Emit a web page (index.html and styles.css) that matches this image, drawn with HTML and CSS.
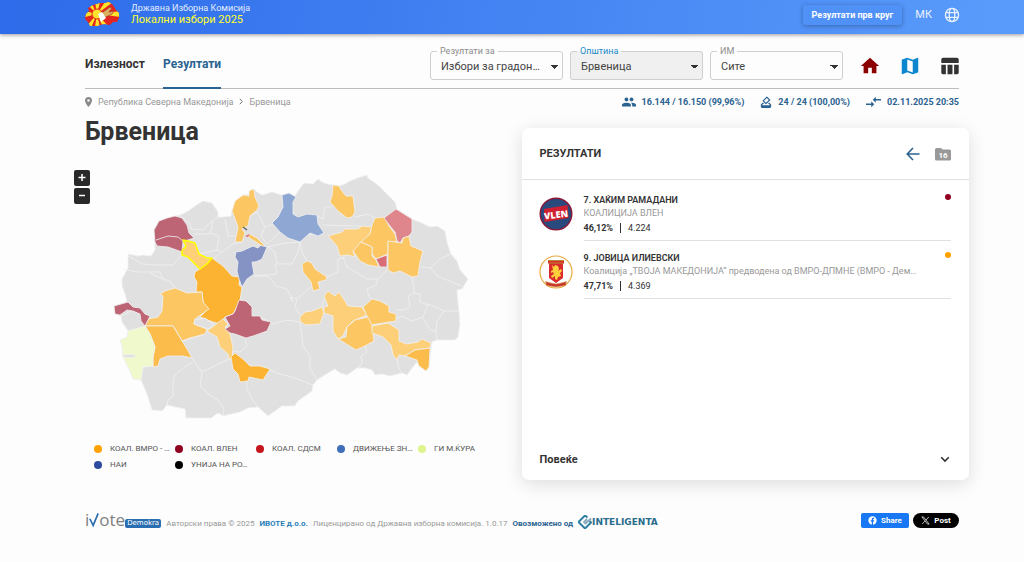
FILE: index.html
```html
<!DOCTYPE html>
<html lang="mk">
<head>
<meta charset="utf-8">
<meta name="viewport" content="width=device-width, initial-scale=1">
<title>Локални избори 2025 – Брвеница</title>
<link rel="stylesheet" href="styles.css">
</head>
<body>
<header class="topbar">
  <a class="brand" href="#">
    <svg class="brand-logo" viewBox="0 0 35 25" aria-hidden="true">
      <clipPath id="mk"><path d="M1 12 4 9 3 6 8 3 12 2 15 1 20 1 24 0 28 3 31 8 34 11 34 16 32 20 28 20 25 23 19 22 12 24 8 24 5 24 3 20 0 17Z"/></clipPath>
      <g clip-path="url(#mk)">
        <rect width="35" height="25" fill="#e3261f"/>
        <path fill="#ffe32b" d="M12 12 0 9v6ZM12 12 0 0h6ZM12 12 10 0h5ZM12 12 20 0h8ZM12 12 35 9v6ZM12 12 24 25h-6ZM12 12 10 25h5ZM12 12 0 26h6Z"/>
        <circle cx="12" cy="12" r="5" fill="#ffe32b" stroke="#e3261f"/>
      </g>
      <path d="M14 12 18 10 25 5 27 6 24 10 29 9 27 12 21 15 16 15Z" fill="#d9b062" stroke="#a8352a" stroke-width=".7"/>
      <path d="m13 12 4-2 4 6-5 4Z" fill="#fff"/>
    </svg>
    <span class="brand-text"><span class="brand-org">Државна Изборна Комисија</span><span class="brand-event">Локални избори 2025</span></span>
  </a>
  <div class="top-actions">
    <button class="round-btn" type="button">Резултати прв круг</button>
    <button class="lang-btn" type="button">МК
      <svg viewBox="0 0 16 16" aria-hidden="true"><g fill="none" stroke="currentColor" stroke-width="1.3"><circle cx="8" cy="8" r="6.600"/><ellipse cx="8" cy="8" rx="2.800" ry="6.600"/><path d="M2 5.600h12M2 10.400h12"/></g></svg>
    </button>
  </div>
</header>

<div class="page">
  <div class="toolbar">
    <nav class="tabs">
      <a class="tab" href="#">Излезност</a>
      <a class="tab active" href="#" aria-current="page">Резултати</a>
    </nav>
    <div class="filters">
      <fieldset class="field">
        <legend><label for="kind">Резултати за</label></legend>
        <select id="kind"><option>Избори за градоначалник</option></select>
      </fieldset>
      <fieldset class="field focus">
        <legend><label for="mun">Општина</label></legend>
        <select id="mun"><option>Брвеница</option></select>
      </fieldset>
      <fieldset class="field">
        <legend><label for="im">ИМ</label></legend>
        <select id="im"><option>Сите</option></select>
      </fieldset>
      <div class="views">
        <a href="#" class="view home" aria-label="Почетна"><svg viewBox="0 0 24 24"><path d="M10 20v-6h4v6h5v-8h3L12 3 2 12h3v8z"/></svg></a>
        <a href="#" class="view map-view" aria-label="Мапа"><svg viewBox="0 0 24 24"><path d="m20.5 3-.16.03L15 5.1 9 3 3.36 4.9c-.21.07-.36.25-.36.48V20.5c0 .28.22.5.5.5l.16-.03L9 18.9l6 2.1 5.640-1.900c.21-.07.36-.25.36-.48V3.500c0-.28-.22-.5-.5-.5zM15 19l-6-2.110V5l6 2.110V19z"/></svg></a>
        <a href="#" class="view table-view" aria-label="Табела"><svg viewBox="0 0 24 24"><path d="M2.500 10.500h5V21h-3a2 2 0 0 1-2-2zM9.300 10.500h5.400V21H9.300zM16.500 10.500h5V19a2 2 0 0 1-2 2h-3zM4.500 3h15a2 2 0 0 1 2 2v3.600h-19V5a2 2 0 0 1 2-2z"/></svg></a>
      </div>
    </div>
  </div>

  <div class="subbar">
    <nav class="crumbs">
      <svg class="pin" viewBox="5 2 14 20" aria-hidden="true"><path d="M12 2a7 7 0 0 0-7 7c0 5.250 7 13 7 13s7-7.750 7-13a7 7 0 0 0-7-7zm0 9.500a2.500 2.500 0 1 1 0-5 2.500 2.500 0 0 1 0 5z"/></svg>
      <a href="#">Република Северна Македонија</a>
      <svg class="sep" viewBox="0 0 4 7" aria-hidden="true"><path d="m.8.8 2.500 2.700L.8 6.200"/></svg>
      <a href="#">Брвеница</a>
    </nav>
    <ul class="stats">
      <li><svg viewBox="1 4 22 16" class="people" aria-hidden="true"><path d="M16 11c1.660 0 3-1.340 3-3s-1.340-3-3-3-3 1.340-3 3 1.340 3 3 3zm-8 0c1.660 0 3-1.340 3-3S9.660 5 8 5 5 6.340 5 8s1.340 3 3 3zm0 2c-2.330 0-7 1.170-7 3.500V19h14v-2.500C15 14.170 10.330 13 8 13zm8 0-1 .05c1.160.84 2 1.970 2 3.450V19h6v-2.500c0-2.330-4.670-3.500-7-3.500z"/></svg>16.144 / 16.150 (99,96%)</li>
      <li><svg viewBox="2 1 20 21" class="ballot" aria-hidden="true"><path d="M18 13h-.68l-2 2h1.910L19 17H5l1.780-2h2.050l-2-2H6l-3 3v4c0 1.100.89 2 1.990 2H19a2 2 0 0 0 2-2v-4zm-1-5.050-4.950 4.950-3.540-3.540 4.950-4.950zm-4.240-5.660L6.390 8.660a1 1 0 0 0 0 1.410l4.950 4.950a1 1 0 0 0 1.410 0l6.360-6.360a1 1 0 0 0 0-1.410L14.160 2.300a1 1 0 0 0-1.400 0z"/></svg>24 / 24 (100,00%)</li>
      <li><svg viewBox="2 4 20 16" class="swap" aria-hidden="true"><path d="m9.010 14-7.010 0v2h7.010v3L13 15l-3.990-4zm5.980-1v-3H22V8h-7.010V5L11 9z"/></svg>02.11.2025 20:35</li>
    </ul>
  </div>

  <main class="content">
    <section class="map-panel">
      <h1>Брвеница</h1>
      <div class="map-box">
        <div class="zoom">
          <button type="button" aria-label="Зголеми"><svg viewBox="0 0 16 16"><path d="M4.500 7.500h7M8 4v7"/></svg></button>
          <button type="button" aria-label="Намали"><svg viewBox="0 0 16 16"><path d="M5 7.500h6"/></svg></button>
        </div>
        <svg class="map" viewBox="110 172 362 250" role="img" aria-label="Мапа на општини">
          <path class="g" d="M122 280 128 269 128 255 138 257 143 256 151 257 155 251 154 231 159 222 175 217 180 216 188 212 198 205 203 202 212 204 218 213 218 218 223 218 231 217 232 211 237 202 243 196 249 195 250 191 254 190 257 193 262 196 272 193 282 196 289 194 295 197 298 192 304 184 313 185 318 180 322 183 327 185 334 186 339 187 345 185 348 183 357 179 367 176 368 179 378 186 395 203 397 210 412 220 422 224 430 228 437 227 445 232 447 243 451 255 457 262 460 271 468 280 462 290 457 291 458 303 459 312 460 325 458 338 455 341 437 341 432 343 431 350 429 368 426 372 419 367 417 363 413 368 407 376 402 374 390 377 382 375 375 376 372 371 365 369 357 369 347 376 340 374 335 370 328 374 317 381 313 386 312 392 298 402 295 407 282 407 268 417 258 408 248 409 240 413 223 417 218 414 211 419 186 419 185 410 175 408 167 406 162 412 152 411 147 395 141 381 133 380 130 372 123 358 122 347 120 341 127 338 128 332 122 323 121 317 115 315 114 307 127 303 125 295 122 287Z"/>
          <path class="b" d="M180 216 190 225 191 230 203 231 212 222 218 218M194 235H210L213 222M213 260 222 253 217 251 219 237 210 234M199 255 217 251M222 253 233 245 242 243M225 220 228 237 235 237M128 257 143 265 151 266 173 266 182 256M123 270 138 273 160 273 163 280 170 282 175 289M163 280 150 274M257 213 265 228 273 225M265 228 261 237 267 245 280 233M250 217 257 213M267 248 285 244 300 243 298 253 292 265 277 265 275 253 268 248M300 243 302 253 307 262M275 265 277 275 254 277M267 277 273 282 276 287 287 290 293 303M300 239 308 236 324 235M318 217 323 220 325 208 332 208M323 226 357 227 367 228M327 278 338 273 338 260 345 258M355 218 368 215 375 219M343 258 347 268 354 272 367 280 378 280 387 271M378 280 376 286 367 290 369 298 372 300M412 278 414 290 414 294 408 297 410 308 404 311 396 311M414 294 420 295 420 303 428 306 423 318 412 322 402 317 388 324M421 268 431 269 440 260 451 255M431 269 437 277 462 287M428 305 444 312 459 312M444 312 437 322 436 332 437 341M423 319 430 331 436 332M399 356 397 361 399 370 402 374M365 347 367 353 361 357 362 365 357 369M271 325 287 321 300 323 303 347 310 357 310 370 317 380M270 371 280 375 295 379 313 386M247 383 247 390 252 400 258 408M293 303 290 298 297 300 295 308 300 316M297 300 311 288M324 300 322 308M245 340 247 347 240 353 233 352M192 359 202 373 229 360M202 373 200 387 211 397 218 401 224 410 223 417M193 363 183 369 174 377 173 387 173 397 168 401 167 406M183 342 205 335M143 368 153 367M121 317 133 311M254 277 267 277M260 318 268 322"/>
          <path class="r" d="M154 231 159 222 167 219 175 217 182 219 187 226 189 234 194 239 188 241 183 242 182 253 168 248 157 247 155 243Z"/>
          <path class="b" d="M156 241 168 237 178 238 183 242"/>
          <path class="o5" d="M212 259 223 267 232 277 240 278 239 286 242 288 240 302 233 315 225 318 220 325 213 323 200 318 208 310 203 303 202 293 196 293 197 283 194 278 195 273 203 268Z"/>
          <path class="o3" d="M160 295 165 292 175 289 187 294 202 293 203 303 209 310 195 320 194 325 207 330 205 335 190 339 182 342 175 330 173 327 145 327 148 320 158 318 162 312 163 297Z"/>
          <path class="o4" d="M145 327 173 327 182 342 187 350 192 359 183 357 168 357 160 360 158 367 153 368 153 358 155 348 150 335Z"/>
          <path class="lime" d="M128 332 145 327 150 335 155 348 153 358 153 367 143 368 141 381 133 380 130 372 123 358 122 347 120 341 127 338Z"/>
          <ellipse class="g" cx="129" cy="357" rx="7" ry="1.500"/>
          <path class="r" d="M114 307 128 303 133 308 140 309 145 315 150 317 145 327 141 322 140 315 133 312 127 311 120 316 115 315Z"/>
          <path class="g" d="M195 321 205 319 214 326 208 330 194 325Z"/>
          <path class="o2" d="M207 332 223 320 228 325 225 328 230 335 233 348 232 360 229 360 228 355 220 348 217 338Z"/>
          <path class="r" d="M239 301 246 302 252 308 252 317 260 317 262 321 271 323 267 332 253 337 246 339 235 335 230 334 225 330 230 327 225 318 233 315 235 312Z"/>
          <path class="o5" d="M235 354 243 360 250 367 260 367 270 370 263 381 249 378 248 382 240 383 238 375 233 370 231 358Z"/>
          <path class="indigo" d="M236 253 242 252 253 247 258 249 261 246 267 248 265 253 262 260 258 262 255 263 252 263 254 275 247 280 242 288 239 280 237 272 238 263 235 258Z"/>
          <path class="o3" d="M232 212 235 202 243 196 249 197 249 192 254 190 255 198 259 207 257 211 250 217 248 227 242 230 245 234 242 243 235 243 237 233 238 228Z"/>
          <path class="o3" d="M250 235 257 239 265 247 262 247 248 238Z"/>
          <path class="rose2 thin" d="m245 237 5-2-2 3Z"/>
          <path class="black" d="m243 228 4 3"/>
          <path class="blue" d="M282 196 289 194 296 198 293 203 293 215 298 218 307 215 317 216 318 225 324 234 318 237 310 234 300 243 288 239 280 233 272 224 278 218 283 208Z"/>
          <path class="o3" d="M333 186 339 187 342 192 346 197 353 197 355 213 352 218 347 219 338 212 330 203 332 197Z"/>
          <path class="o2" d="M328 237 342 233 345 230 358 230 362 227 372 228 370 235 363 247 353 252 355 258 348 256 340 257 337 247Z"/>
          <path class="o3" d="M375 219 385 218 389 227 395 235 397 243 388 243 388 255 376 260 372 255 372 248 361 243 370 235 372 226Z"/>
          <path class="o3" d="M361 243 372 248 372 257 376 261 379 268 368 266 360 262 353 252Z"/>
          <path class="rose" d="M384 219 396 210 412 220 412 233 409 237 403 239 400 244 397 242 395 233 390 227Z"/>
          <path class="o3" d="M388 242 402 244 403 239 409 237 411 247 423 252 420 263 418 277 412 278 400 272 393 274 388 271Z"/>
          <path class="rose2" d="M376 260 387 256 387 268 380 268Z"/>
          <path class="o3" d="M302 265 307 262 312 264 315 270 327 278 326 281 318 283 320 290 313 292 311 283 303 273Z"/>
          <path class="o2" d="M300 318 305 313 312 312 322 308 324 314 320 325 305 326 300 322Z"/>
          <path class="o2" d="M324 308 328 307 324 297 328 292 335 297 339 293 345 302 348 307 362 308 367 316 353 322 347 328 343 337 338 340 333 332 333 317 324 314Z"/>
          <path class="o3" d="M347 328 355 321 368 318 372 322 372 328 374 342 365 347 356 351 343 343 338 340 346 338Z"/>
          <path class="o3" d="M363 308 372 300 380 302 389 307 389 313 396 315 396 322 377 325 372 326 367 317Z"/>
          <path class="o2" d="M372 327 388 324 399 331 399 342 407 345 418 343 422 340 431 344 430 349 415 351 405 357 399 356 397 361 393 356 391 346 383 338 372 334Z"/>
          <path class="o4" d="M405 357 415 351 430 349 429 368 426 372 419 367 417 361Z"/>
          <path class="o2 sel" d="M183 241 188 242 195 244 199 255 207 259 212 259 207 265 200 270 193 263 188 258 182 256 182 252 186 247Z"/>
        </svg>
      </div>
      <ul class="legend">
        <li><i class="dot c-orange"></i><span>КОАЛ. ВМРО - …</span></li>
        <li><i class="dot c-wine"></i><span>КОАЛ. ВЛЕН</span></li>
        <li><i class="dot c-red"></i><span>КОАЛ. СДСМ</span></li>
        <li><i class="dot c-blue"></i><span>ДВИЖЕЊЕ ЗН…</span></li>
        <li><i class="dot c-lime"></i><span>ГИ М.ЌУРА</span></li>
        <li><i class="dot c-indigo"></i><span>НАИ</span></li>
        <li><i class="dot c-black"></i><span>УНИЈА НА РО…</span></li>
      </ul>
    </section>

    <section class="card">
      <header class="card-head">
        <h2>РЕЗУЛТАТИ</h2>
        <button type="button" class="back" aria-label="Назад"><svg viewBox="0 0 14 14"><path d="M13.500 7H1.500M7 1 1.200 7 7 13"/></svg></button>
        <span class="folder"><svg viewBox="0 0 16 14" aria-hidden="true"><path d="M1.500 1H6l1.500 1.500h7A1.500 1.500 0 0 1 16 4v8a1.500 1.500 0 0 1-1.500 1.500h-13A1.500 1.500 0 0 1 0 12V2.500A1.500 1.500 0 0 1 1.500 1z"/><text x="8" y="11">16</text></svg></span>
      </header>
      <ul class="results">
        <li>
          <svg class="avatar" viewBox="0 0 34 34" aria-hidden="true"><circle cx="17" cy="17" r="15.800" fill="#294a7c" stroke="#8d1637" stroke-width="1.400"/><path d="m5 12 23.500-4 1 13L5.500 25Z" fill="#d01f30"/><text class="vlen" x="17" y="21" transform="rotate(-7 17 17)">VLEN</text></svg>
          <div class="result">
            <div class="who"><strong>7. ХАЌИМ РАМАДАНИ</strong><i class="dot c-wine"></i></div>
            <div class="party">КОАЛИЦИЈА ВЛЕН</div>
            <div class="votes"><b>46,12%</b><span>4.224</span></div>
          </div>
        </li>
        <li>
          <svg class="avatar" viewBox="0 0 34 34" aria-hidden="true"><circle cx="17" cy="17" r="16" fill="#fff" stroke="#e6ac42" stroke-width="1.200"/><path d="M9 5h16v3l-1 1v14l-7 5-7-5V9L9 8Z" fill="#d92a2c"/><path d="M9 5.500h16M9.500 8h15" stroke="#b88a35" stroke-width="1.200"/><path d="M6.500 26.500 12 28l5 1 5-1 5.500-1.500-1 4-9.500 1.500-9.500-1.500Z" fill="#c9362e" stroke="#d9a14a" stroke-width=".6"/><path d="m13 10 2 2 1-2 3 1 1 3-1 2 3-2 1 2-2 2 1 3-3 1-1 3-2-1v-3l-3 2-1-2 3-2-1-2-2 1v-2l2-1Z" fill="#ffd03c"/></svg>
          <div class="result">
            <div class="who"><strong>9. ЈОВИЦА ИЛИЕВСКИ</strong><i class="dot c-orange"></i></div>
            <div class="party">Коалиција „ТВОЈА МАКЕДОНИЈА“ предводена од ВМРО-ДПМНЕ (ВМРО - Дем…</div>
            <div class="votes"><b>47,71%</b><span>4.369</span></div>
          </div>
        </li>
      </ul>
      <button class="more" type="button">Повеќе<svg viewBox="0 0 10 7" aria-hidden="true"><path d="m1.200 1.200 3.800 3.800 3.800-3.800"/></svg></button>
    </section>
  </main>

  <footer class="footer">
    <a class="ivote" href="#"><span>i</span><svg viewBox="0 0 12 18" aria-hidden="true"><path d="M1 7.500 5 15.500 11 1"/></svg><span>ote</span><b>Demokra</b></a>
    <span>Авторски права © 2025</span>
    <a class="strong" href="#">ИВОТЕ д.о.о.</a>
    <span>Лиценцирано од Државна изборна комисија. 1.0.17</span>
    <span class="powered">Овозможено од</span>
    <a class="intel" href="#"><svg viewBox="0 0 14 14" aria-hidden="true"><path d="M9.500 2.500 7 .5.500 7 7 13.500 13 7.500 11.500 6" fill="none" stroke="#2f7fa3" stroke-width="2"/><path d="M9 4 6 7l1.500 1.500L13 3.500" fill="none" stroke="#86a9bb" stroke-width="1.800"/></svg>INTELIGENTA</a>
    <div class="share">
      <button type="button" class="fb"><svg viewBox="0 0 10 10" aria-hidden="true"><circle cx="5" cy="5" r="4.600" fill="#fff"/><path d="M4.200 10V6H3V4.700h1.200v-.9C4.200 2.600 4.900 2 6 2h.9v1.200h-.6c-.5 0-.7.2-.7.600v.9h1.300L6.700 6H5.600v4z" fill="#1877f2"/></svg>Share</button>
      <button type="button" class="x"><svg viewBox="0 0 10 10" aria-hidden="true"><path d="M1 1h1.800L9 9H7.200ZM8.800 1 5.500 4.600M4.300 5.700 1.200 9" fill="none" stroke="#fff" stroke-width=".8"/></svg>Post</button>
    </div>
  </footer>
</div>
</body>
</html>
```
FILE: styles.css
```css
* { box-sizing: border-box; }
body {
  margin: 0;
  background: #fdfdfd;
  color: #333;
  font-family: Roboto, "Noto Sans", sans-serif;
  font-size: 10px;
}
a { color: inherit; text-decoration: none; }
button { border: 0; padding: 0; background: none; color: inherit; font: inherit; cursor: pointer; }
ul { list-style: none; margin: 0; padding: 0; }
h1, h2 { margin: 0; }
svg { display: block; flex: none; }

.topbar {
  display: flex;
  justify-content: space-between;
  height: 34px;
  padding: 0 64px 5px 85px;
  background: linear-gradient(100deg, #2d6bea, #5a9cfb);
  box-shadow: 0 1px 4px rgba(0, 0, 0, .4);
  color: #fff;
}
.brand { display: flex; align-items: center; gap: 11px; }
.brand-logo { width: 35px; height: 25px; }
.brand-text { display: flex; flex-direction: column; }
.brand-org { font-size: 9px; line-height: 11px; color: #e3edff; }
.brand-event { font-size: 11px; line-height: 12px; color: #ffff2e; }
.top-actions { display: flex; align-items: center; gap: 13px; }
.round-btn {
  height: 20px;
  padding: 0 9px;
  border-radius: 3px;
  background: #5091f7;
  box-shadow: 0 1px 5px rgba(0, 0, 0, .3);
  font-size: 9px;
  font-weight: 700;
}
.lang-btn { display: flex; align-items: center; gap: 12px; color: #e9f1ff; font-size: 11px; }
.lang-btn svg { width: 16px; height: 16px; }

.page { padding: 0 55px 0 74px; }
.toolbar {
  display: flex;
  justify-content: space-between;
  margin: 0 8px 0 11px;
  height: 55px;
  background: linear-gradient(#bdbdbd, #bdbdbd) left bottom / calc(100% - 2px) 1px no-repeat;
}
.tabs { display: flex; gap: 18px; }
.tab { padding-top: 22px; height: 55px; font-size: 12px; line-height: 16px; font-weight: 700; }
.tab.active { color: #2a6291; border-bottom: 2px solid #2a6291; }
.filters { display: flex; gap: 7px; align-items: flex-start; padding-top: 11px; }
.field {
  width: 133px;
  min-width: 0;
  margin: 0;
  padding: 0;
  border: 1px solid #cfcfcf;
  border-radius: 3px;
}
.field legend { margin-left: 6px; padding: 0 3px; font-size: 9px; line-height: 12px; color: #8c8c8c; }
.field.focus { background: #f0f0f0; }
.field.focus legend { color: #1d8ccb; }
.field select {
  display: block;
  width: 100%;
  height: 20px;
  margin-bottom: 2px;
  padding: 0 22px 0 10px;
  border: 0;
  appearance: none;
  background: conic-gradient(from -45deg at 50% 100%, #333 90deg, transparent 0) right 4px center / 8px 4px no-repeat;
  color: #444;
  font: 11px/16px Roboto, "Noto Sans", sans-serif;
  text-overflow: ellipsis;
  overflow: hidden;
  white-space: nowrap;
}
.views { display: flex; gap: 18px; padding: 10px 0 0 9px; }
.view svg { width: 22px; height: 22px; fill: currentColor; }
.home { color: #8b0000; }
.map-view { color: #0c87cf; }
.table-view { color: #333; }

.subbar {
  display: flex;
  justify-content: space-between;
  align-items: center;
  margin: 0 10px 0 11px;
  height: 25px;
  font-size: 9px;
}
.crumbs { display: flex; align-items: center; gap: 6px; color: #999; }
.pin { width: 7px; height: 10px; fill: #8a8a8a; }
.sep { width: 4px; height: 7px; fill: none; stroke: #777; }
.stats { display: flex; gap: 16px; color: #2a6291; font-weight: 700; }
.stats li { display: flex; align-items: center; gap: 6px; }
.stats svg { height: 12px; fill: currentColor; }
.people { width: 14px; }
.ballot { width: 12px; }
.swap { width: 15px; }

.content { display: grid; grid-template-columns: 1fr 1fr; }
.map-panel { min-width: 0; }
h1 { padding: 3px 0 0 11px; font-size: 25px; line-height: 30px; color: #333; }
.map-box { display: flex; gap: 20px; align-items: flex-start; padding-top: 23px; }
.zoom { display: grid; gap: 2px; }
.zoom button { width: 16px; height: 16px; border-radius: 2px; background: #292929; }
.zoom svg { width: 16px; height: 16px; fill: none; stroke: #fff; stroke-width: 1.5; }
.map { flex: 1; min-width: 0; max-width: 362px; margin-top: 1px; }
.map path, .map ellipse { stroke: #f1f1f1; stroke-width: .8; stroke-linejoin: round; }
.map .g { fill: #e0e0e0; }
.map .b { fill: none; }
.map .r { fill: #bd6475; }
.map .rose { fill: #de868c; }
.map .rose2 { fill: #d96d77; }
.map .o2 { fill: #fccf78; }
.map .o3 { fill: #fcc663; }
.map .o4 { fill: #fcbc4b; }
.map .o5 { fill: #fcb332; }
.map .lime { fill: #eff9cb; }
.map .indigo { fill: #8492c4; }
.map .blue { fill: #8fa7d3; }
.map .thin { stroke: none; }
.map .black { stroke: #666; stroke-width: 1.5; }
.map .sel { stroke: #ff0; stroke-width: 1.5; }
.legend {
  display: grid;
  grid-template-columns: repeat(5, 81px);
  row-gap: 4px;
  padding: 22px 0 0 20px;
  font-size: 8px;
  line-height: 12px;
  color: #555;
}
.legend li { display: flex; align-items: center; gap: 8px; white-space: nowrap; }
.dot { flex: none; width: 8px; height: 8px; border-radius: 50%; }
.c-orange { background: #ffa200; }
.c-wine { background: #90001f; }
.c-red { background: #c4161c; }
.c-blue { background: #3f6fbb; }
.c-lime { background: #def48f; }
.c-indigo { background: #2f4ba0; }
.c-black { background: #000; }

.card {
  display: flex;
  flex-direction: column;
  align-self: start;
  min-width: 0;
  min-height: 352px;
  margin-top: 14px;
  border-radius: 7px;
  background: #fff;
  box-shadow: 0 4px 18px rgba(0, 0, 0, .13);
}
.card-head {
  display: flex;
  align-items: center;
  height: 52px;
  padding: 0 18px;
  border-bottom: 1px solid #e0e0e0;
}
.card-head h2 { flex: 1; font-size: 11px; }
.back svg { width: 14px; height: 14px; fill: none; stroke: #2a6291; stroke-width: 1.6; }
.folder { margin-left: 15px; }
.folder svg { width: 16px; height: 14px; fill: #999; }
.folder text { fill: #fff; font-size: 8px; font-weight: 700; text-anchor: middle; }
.results { flex: 1; padding: 3px 18px 0 17px; }
.results li { display: flex; gap: 11px; }
.avatar { width: 34px; height: 34px; margin-top: 14px; }
.vlen { fill: #fff; font-family: "Open Sans", sans-serif; font-size: 9px; font-weight: 800; text-anchor: middle; }
.result { flex: 1; min-width: 0; height: 58px; padding-top: 11px; border-bottom: 1px solid #e0e0e0; }
.who { display: flex; justify-content: space-between; font-size: 9px; line-height: 13px; }
.who strong { font-weight: 600; }
.who .dot { width: 6px; height: 6px; }
.party {
  overflow: hidden;
  text-overflow: ellipsis;
  white-space: nowrap;
  font-size: 9px;
  line-height: 13px;
  color: #999;
}
.votes { padding-top: 2px; font-size: 9px; line-height: 13px; }
.votes span { margin-left: 7px; padding-left: 7px; border-left: 1px solid #333; }
.more {
  display: flex;
  align-items: center;
  justify-content: space-between;
  height: 42px;
  padding: 0 19px 0 18px;
  font-size: 11px;
  font-weight: 700;
}
.more svg { width: 10px; height: 7px; fill: none; stroke: #333; stroke-width: 1.6; }

.footer {
  display: flex;
  align-items: flex-end;
  gap: 5px;
  margin: 31px 10px 0 11px;
  font-size: 8px;
  line-height: 10px;
  color: #999;
  white-space: nowrap;
}
.ivote { display: flex; align-items: flex-end; color: #808080; font: 17px/18px "Open Sans", sans-serif; }
.ivote svg { width: 10px; height: 18px; fill: none; stroke: #2a6db0; stroke-width: 2; }
.ivote b { margin-bottom: 1px; padding: 0 2px; border-radius: 2px; background: #2a6db0; color: #fff; font: 7px/9px "DejaVu Sans", sans-serif; }
.strong { color: #2a7fb8; font-weight: 700; }
.powered { color: #2a6291; font-weight: 700; }
.intel { display: flex; align-items: center; color: #2a6d8c; font: 700 9px/14px "DejaVu Sans", sans-serif; }
.intel svg { width: 14px; height: 14px; }
.share { display: flex; gap: 4px; margin-bottom: 1px; margin-left: auto; color: #fff; font-size: 8px; font-weight: 700; }
.share button { display: flex; align-items: center; justify-content: center; gap: 4px; height: 15px; }
.share svg { width: 9px; height: 9px; }
.fb { width: 48px; border-radius: 2px; background: #1877f2; }
.x { width: 46px; border-radius: 8px; background: #000; }
```
